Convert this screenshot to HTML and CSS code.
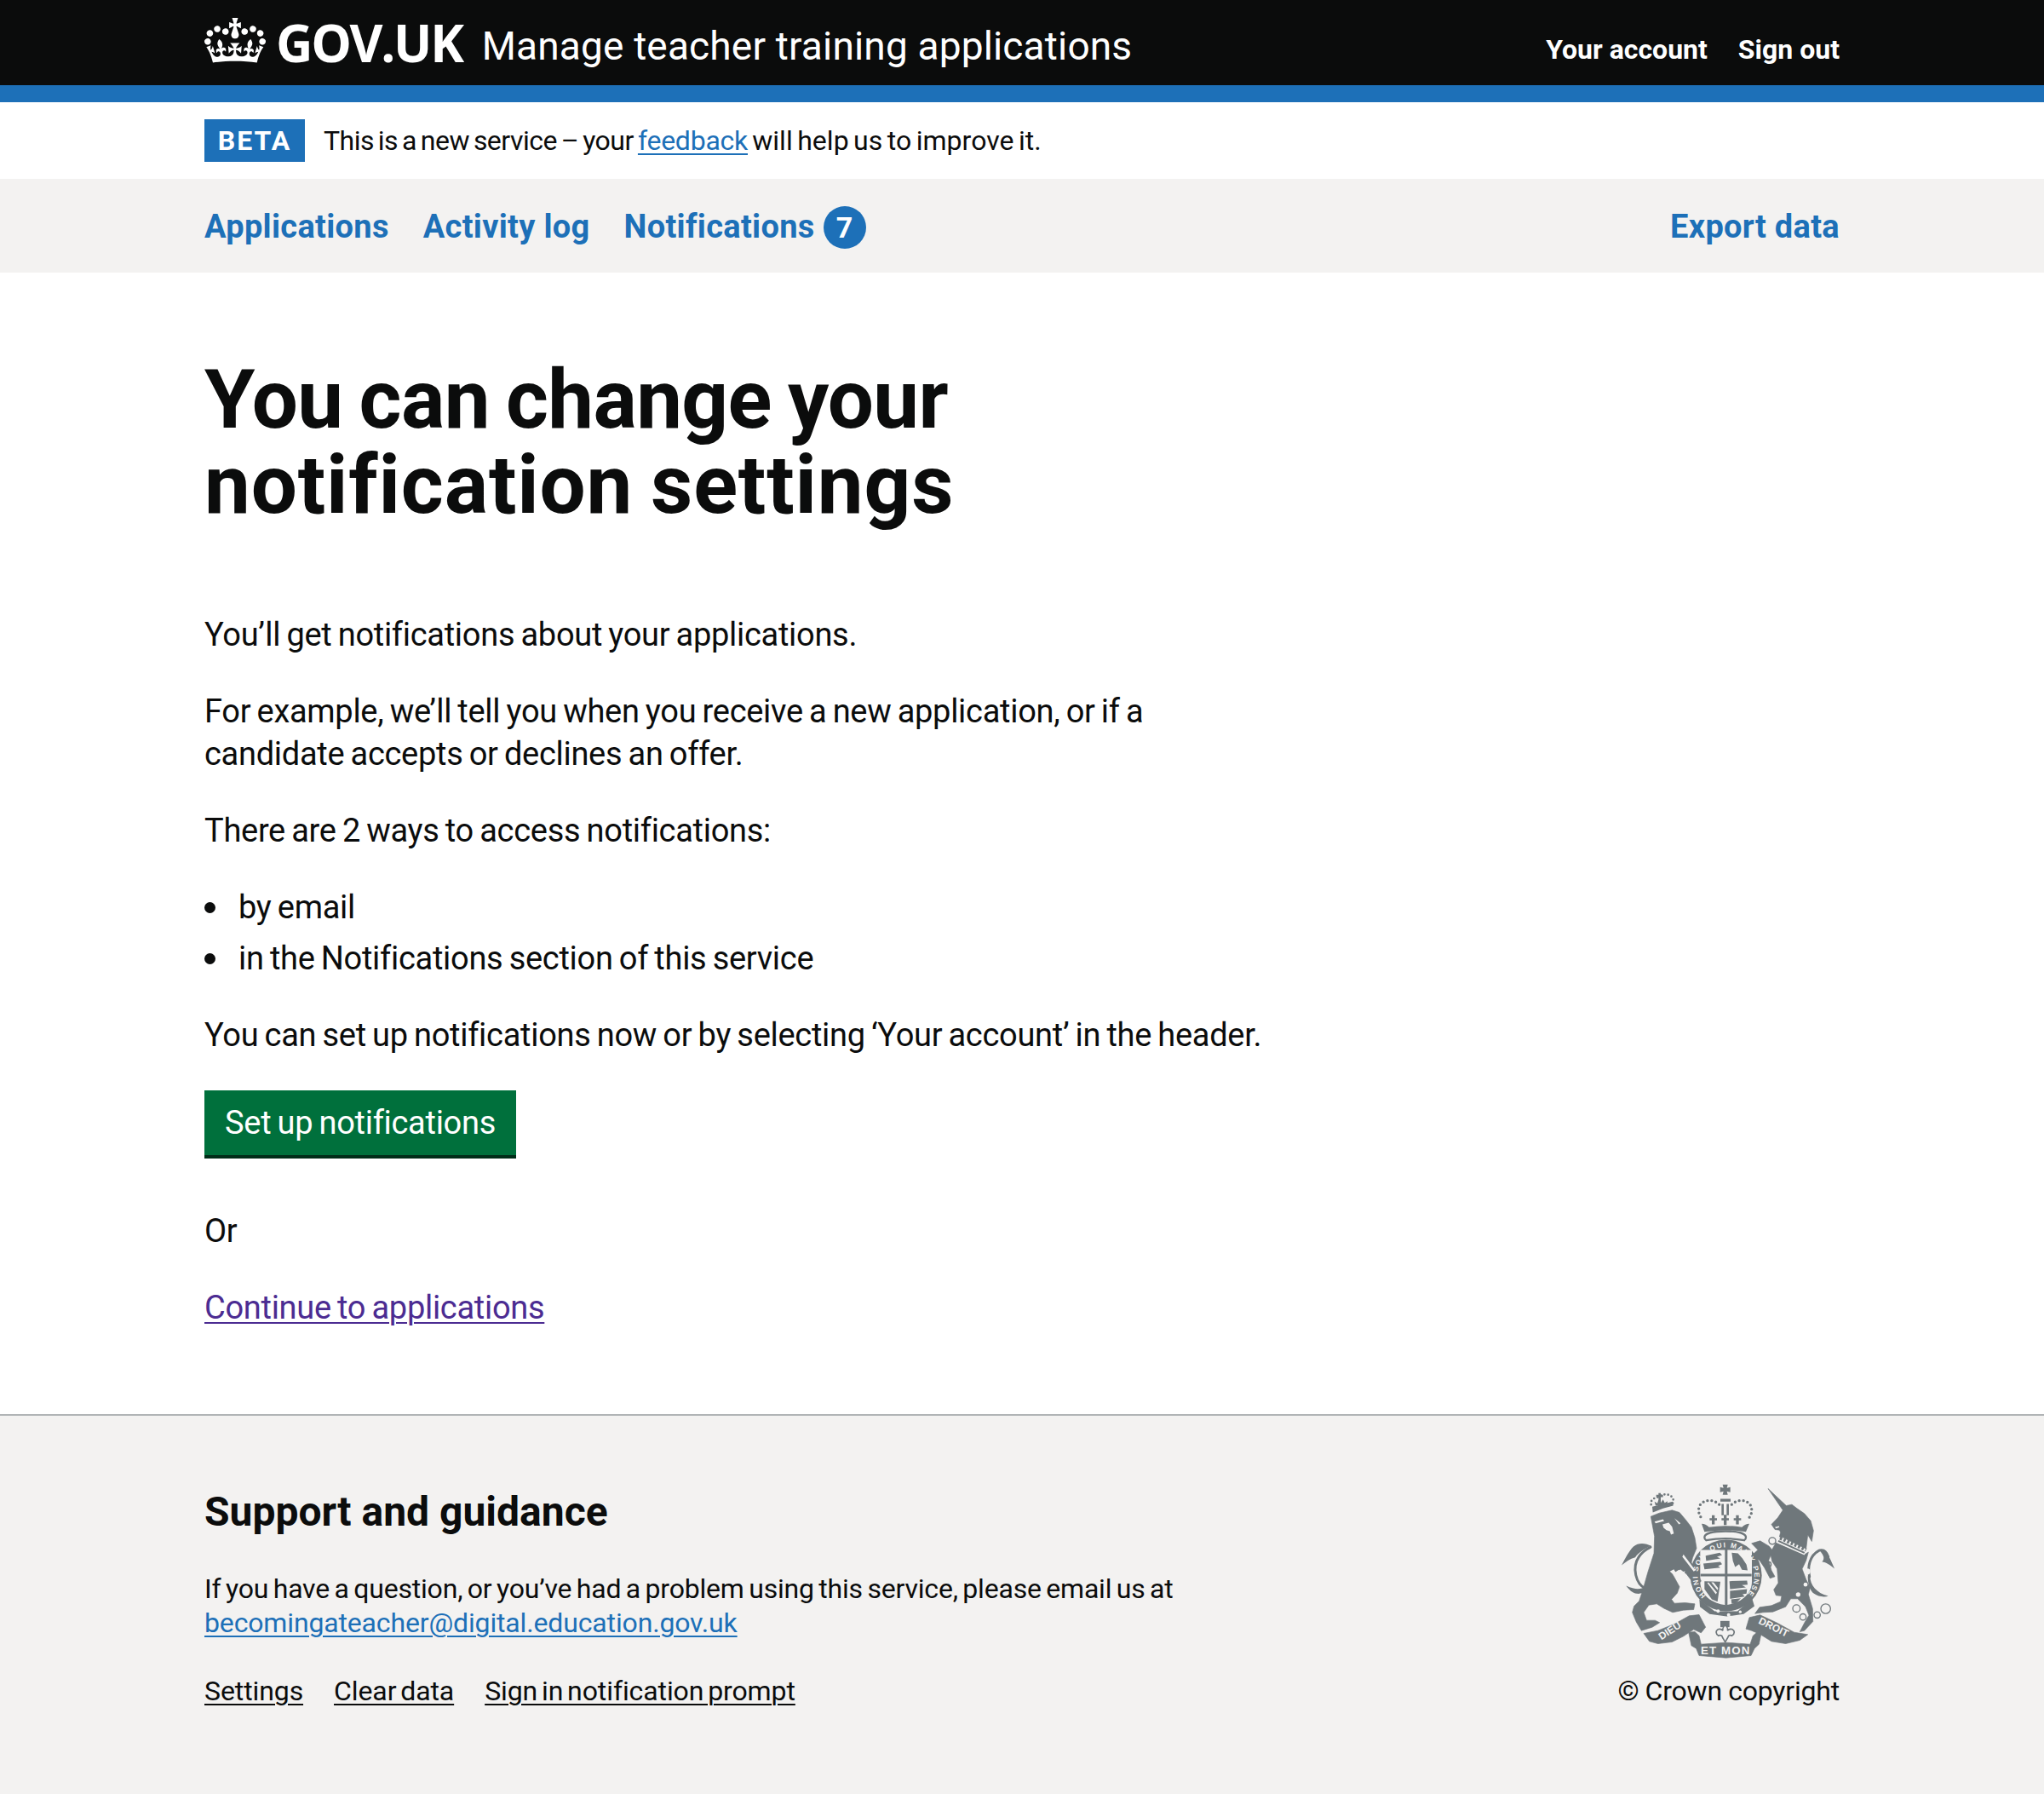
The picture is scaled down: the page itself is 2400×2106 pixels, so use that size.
FILE: index.html
```html
<!DOCTYPE html>
<html lang="en">
<head>
<meta charset="utf-8">
<title>You can change your notification settings</title>
<link rel="stylesheet" href="styles.css">
</head>
<body>
<header class="header">
  <div class="wrap header-row">
    <div class="brand">
      <svg class="crown" viewBox="0 0 132 97" aria-hidden="true"><path fill="currentColor" d="M25 30.2c3.5 1.5 7.7-.2 9.1-3.7 1.5-3.6-.2-7.8-3.9-9.2-3.6-1.4-7.6.3-9.1 3.9-1.4 3.5.3 7.5 3.9 9zM9 39.5c3.6 1.5 7.8-.2 9.2-3.7 1.5-3.6-.2-7.8-3.9-9.1-3.6-1.5-7.6.2-9.1 3.8-1.4 3.5.3 7.5 3.8 9zM4.4 57.2c3.5 1.5 7.7-.2 9.1-3.8 1.5-3.6-.2-7.7-3.9-9.1-3.5-1.5-7.6.3-9.1 3.8-1.4 3.5.3 7.6 3.9 9.1zm38.3-21.4c3.5 1.5 7.7-.2 9.1-3.8 1.5-3.6-.2-7.7-3.9-9.1-3.6-1.5-7.6.3-9.1 3.8-1.3 3.6.4 7.7 3.9 9.1zm64.4-5.6c-3.6 1.5-7.8-.2-9.1-3.7-1.5-3.6.2-7.8 3.8-9.2 3.6-1.4 7.7.3 9.2 3.9 1.3 3.5-.4 7.5-3.9 9zm15.9 9.3c-3.6 1.5-7.7-.2-9.1-3.7-1.5-3.6.2-7.8 3.7-9.1 3.6-1.5 7.7.2 9.2 3.8 1.5 3.5-.3 7.5-3.8 9zm4.7 17.7c-3.6 1.5-7.8-.2-9.2-3.8-1.5-3.6.2-7.7 3.9-9.1 3.6-1.5 7.7.3 9.2 3.8 1.3 3.5-.4 7.6-3.9 9.1zM89.3 35.8c-3.6 1.5-7.8-.2-9.2-3.8-1.4-3.6.2-7.7 3.9-9.1 3.6-1.5 7.7.3 9.2 3.8 1.4 3.6-.3 7.7-3.9 9.1zM69.7 17.7l8.9 4.7V9.3l-8.9 2.8c-.2-.3-.5-.6-.9-.9L72.4 0H59.6l3.5 11.2c-.3.3-.6.5-.9.9l-8.8-2.8v13.1l8.8-4.7c.3.3.6.7.9.9l-5 15.4v.1c-.2.8-.4 1.6-.4 2.4 0 4.1 3.1 7.5 7 8.1h.2c.3 0 .7.1 1 .1.4 0 .7 0 1-.1h.2c4-.6 7.1-4.1 7.1-8.1 0-.8-.1-1.7-.4-2.4V34l-5.1-15.4c.4-.2.7-.6 1-.9zM66 92.8c16.9 0 32.8 1.1 47.1 3.2 4-16.9 8.9-26.7 14-33.5l-9.6-3.4c1 4.9 1.1 7.2 0 10.2-1.5-1.4-3-4.3-4.2-8.7L108.6 76c2.8-2 5-3.2 7.5-3.3-4.4 9.4-10 11.9-13.6 11.2-4.3-.8-6.3-4.6-5.6-7.9 1-4.7 5.7-5.9 8-.5 4.3-8.7-3-11.4-7.6-8.8 7.1-7.2 7.9-13.5 2.1-21.1-8 6.1-8.1 12.3-4.5 20.8-4.7-5.4-12.1-2.5-9.5 6.2 3.4-5.2 7.9-2 7.2 3.1-.6 4.3-6.4 7.8-13.5 7.2-10.3-.9-10.9-8-11.2-13.8 2.5-.5 7.1 1.8 11 7.3L80.2 60c-4.1 4.4-8 5.3-12.3 5.4 1.4-4.4 8-11.6 8-11.6H55.5s6.4 7.2 7.9 11.6c-4.2-.1-8-1-12.3-5.4l1.4 16.4c3.9-5.5 8.5-7.7 10.9-7.3-.3 5.8-.9 12.8-11.1 13.8-7.2.6-12.9-2.9-13.5-7.2-.7-5 3.8-8.3 7.1-3.1 2.7-8.7-4.6-11.6-9.4-6.2 3.7-8.5 3.6-14.7-4.6-20.8-5.8 7.6-5 13.9 2.2 21.1-4.7-2.6-11.9.1-7.7 8.8 2.3-5.5 7.1-4.2 8.1.5.7 3.3-1.3 7.1-5.7 7.9-3.5.7-9-1.8-13.5-11.2 2.5.1 4.7 1.3 7.5 3.3l-4.7-15.4c-1.2 4.4-2.7 7.2-4.3 8.7-1.1-3-.9-5.3 0-10.2l-9.5 3.4c5 6.9 9.9 16.7 14 33.5 14.8-2.1 30.8-3.2 47.7-3.2z"/></svg>
      <span class="logotype">GOV.UK</span>
      <span class="service">Manage teacher training applications</span>
    </div>
    <nav class="account">
      <a href="#">Your account</a>
      <a href="#">Sign out</a>
    </nav>
  </div>
</header>
<div class="stripe"></div>
<div class="wrap phase">
  <strong class="tag">BETA</strong>
  <span><span class="lead">This is a new service – your</span> <a href="#" class="link">feedback</a> <span class="tail">will help us to improve it.</span></span>
</div>
<nav class="primary">
  <div class="wrap primary-row">
    <div class="primary-left">
      <a href="#">Applications</a>
      <a href="#">Activity log</a>
      <a href="#" class="notif">Notifications <span class="count">7</span></a>
    </div>
    <a href="#">Export data</a>
  </div>
</nav>
<main class="wrap main">
  <h1><span class="h1-a">You can change your</span><br><span class="h1-b">notification settings</span></h1>
  <p>You’ll get notifications about your applications.</p>
  <p>For example, we’ll tell you when you receive a new application, or if a<br>candidate accepts or declines an offer.</p>
  <p>There are 2 ways to access notifications:</p>
  <ul class="bullets">
    <li>by email</li>
    <li>in the Notifications section of this service</li>
  </ul>
  <p>You can set up notifications now or by selecting ‘Your account’ in the header.</p>
  <a href="#" class="button">Set up notifications</a>
  <p>Or</p>
  <p class="last"><a href="#" class="visited">Continue to applications</a></p>
</main>
<footer class="footer">
  <div class="wrap footer-row">
    <div class="footer-left">
      <h2>Support and guidance</h2>
      <p>If you have a question, or you’ve had a problem using this service, please email us at<br><a href="#" class="link email">becomingateacher@digital.education.gov.uk</a></p>
      <ul class="meta">
        <li><a href="#">Settings</a></li>
        <li><a href="#">Clear data</a></li>
        <li><a href="#">Sign in notification prompt</a></li>
      </ul>
    </div>
    <div class="footer-right">
      <svg class="arms" viewBox="60 30 780 620" aria-hidden="true">
        <defs>
          <path id="garter" d="M369 429A100 100 0 1 1 511 429"/>
        </defs>
        <g class="ag">
          <!-- lion tail -->
          <path class="as8" d="M156 404C122 388 108 330 132 294c10-16 26-28 42-36"/>
          <path d="M176 254c-18-10-44-14-62 2-18 18-30 44-42 66 14-12 30-24 48-28 12-16 34-32 56-40zM156 398c-16 8-34 12-68-4 10 14 22 26 38 28 14 1 26-4 36-10z"/>
          <!-- crest -->
          <path d="M428 38h18l-3 12 12-3v18l-12-3 3 12h-18l3-12-12 3V47l12 3zM420 88h36v10h-36zM424 106h8v40h-8zM442 106h8v40h-8z"/>
          <path class="ao10" d="M416 108c-24-24-68-16-72 14-2 16 4 30 16 40M460 108c24-24 66-16 70 14 2 16-4 30-16 40"/>
          <path d="M390 146h10v10h8v8h-8v14h-10v-14h-8v-8h8zM432 144h10v12h8v8h-8v16h-10v-16h-8v-8h8zM475 146h10v10h8v8h-8v14h-10v-14h-8v-8h8z"/>
          <path d="M354 176q14 0 26 12q58-10 116 0q12-12 26-12l-12 28q-72-10-146 0z"/>
          <path class="ao7" d="M364 224c0-14 30-22 74-22s72 8 72 22c0 6-2 8-6 10-44-8-90-8-134 0-4-2-6-4-6-10z"/>
          <!-- garter ring -->
          <circle cx="440" cy="358" r="126"/>
          <path class="al" d="M349 268h182v112c0 44-40 76-91 82-52-4-91-38-91-82z"/>
          <path d="M436 266h9v198h-9zM350 352h180v9H350z"/>
          <path d="M368 288l50-10 8 8-18 6 12 6-50 8zM360 316l60-6 6 8-14 6 8 6-56 6zM460 278l22 2 16 18 14 22 4 20-20-2-10-20-14 10-8-22zM364 378l56 2-10 70-20-8-26-36zM452 378l62-2 2 14-20 2 14 8-56 6zM454 412l60-6-2 16-14 2 8 8-52 8zM458 442l34-4-18 18-14 2z"/>
          <path class="al" d="M374 384l30 40 4-6-30-36zM388 382l22 28 2-8-16-20z"/>
          <path d="M346 442l54 42h80l52-44 8 26-38 28-60 8-60-8-34-26z"/>
          <circle class="al" cx="412" cy="483" r="6"/><circle class="al" cx="449" cy="497" r="6"/><circle class="al" cx="490" cy="486" r="5"/>
          <!-- lion body -->
          <path class="as2" d="M175 150L205 138L250 128L276 136L298 162L318 188L330 225L336 262L322 296L318 312L340 350L352 378L340 388L320 378L300 352L280 336L262 345L245 342L262 372L276 398L268 420L248 442L258 456L296 454L330 458L326 478L290 480L252 488L222 474L196 458L168 462L150 488L160 516L190 516L206 524L180 540L142 552L124 522L110 488L116 466L134 448L148 405L165 345L186 280L188 220Z"/>
          <path class="al" d="M216 178l22-6 12 14 6 24-10 4-4-12-12-4-10-8zM290 284l42 56-6 4-40-52zM242 344l14-8 6 10 12-8 8 10 14-6-10 20-10-2-8 10-12-14z"/>
          <path class="al" d="M188 168l30-8 4 6-30 8zM258 156l22 18-6 4z"/>
          <!-- lion crown -->
          <path class="ao5" d="M176 108c-4-14 10-24 24-26 18-12 36-14 50 0 6 6 4 14 2 22"/>
          <path d="M180 116l72-18 2 14-36 10-36 14zM202 68h8v6h8v8h-8v22h-8V82h-8v-8h8z"/>
          <path d="M192 112l-4-14 10 6 4-12 8 10 8-12 6 12 10-6-2 12z"/>
          <!-- unicorn tail -->
          <path class="as8" d="M734 362c-8-34 0-74 34-92 18-6 26 4 32 22"/>
          <path d="M768 266c20-4 34 18 54 68-18-14-28-22-44-24 0 0 10-10 4-22-4-8-8-12-14-22zM736 360c0 30 22 60 64 70-14 6-36 2-50-8-14-10-22-34-22-62z"/>
          <!-- unicorn -->
          <path class="as2" d="M588 52L652 112L672 108L690 122L716 140L738 165L748 200L742 238L728 215L722 264L640 224L628 222L632 206L628 198L612 196L600 178L622 155L640 128Z"/>
          <path class="as2" d="M616 242L716 284L730 276L722 305L708 335L722 372L736 400L730 425L745 475L746 520L716 552L700 556L716 525L732 498L720 468L692 440L668 440L650 468L605 486L570 488L542 492L558 470L600 464L632 450L636 430L616 428L608 408L624 384L620 335L602 308L596 278Z"/>
          <path class="as2" d="M530 245L560 236L592 255L612 280L596 290L590 305L600 340L612 362L595 368L575 330L558 305L528 290L552 268Z"/>
          <path class="al" d="M626 222L726 268L716 286L616 242Z"/>
          <path class="ad" d="M630 226L722 268"/>
          <path class="at6" d="M624 236L716 278"/>
          <circle class="al" cx="726" cy="344" r="11"/><circle class="al" cx="720" cy="390" r="7"/><circle class="al" cx="694" cy="425" r="8"/>
          <path class="al" d="M612 188l14-4 2 4-12 4z"/>
          <!-- fleur -->
          <path d="M420 518h32v22h-32z"/>
          <path class="af" d="M437 532c8 8 10 14 8 20 6-6 16-8 22 0 4 8 0 14-6 18-4-2-8-2-12 0-2 6-6 12-12 22-6-10-10-16-12-22-4-2-8-2-12 0-6-4-10-10-6-18 6-8 16-6 22 0-2-6 0-12 8-20z"/>
          <!-- scrolls -->
          <path class="as2" d="M150 562L200 552L260 528L310 500L345 496L368 540L352 560L326 548L290 572L250 592L200 598L170 590Z"/>
          <path class="as2" d="M522 506L560 497L620 525L680 558L728 566L700 586L650 598L600 590L560 565L530 552L510 546Z"/>
          <path class="as2" d="M308 558L330 556L345 570L352 600L440 594L525 600L535 570L552 555L566 552L556 600L540 615L528 640L440 648L345 640L335 615L318 605Z"/>
        </g>
        <g class="ar">
          <circle cx="603" cy="236" r="12"/><circle cx="590" cy="319" r="9"/><circle cx="688" cy="474" r="13"/><circle cx="711" cy="504" r="11"/><circle cx="761" cy="497" r="11"/><circle cx="791" cy="475" r="17"/>
        </g>
        <g class="at">
          <text class="small"><textPath href="#garter" textLength="462">HONI SOIT QUI MAL Y PENSE</textPath></text>
          <text transform="translate(212 586) rotate(-33)">DIEU</text>
          <text class="mon" x="351" y="635" textLength="172">ET MON</text>
          <text transform="translate(552 526) rotate(26)">DROIT</text>
        </g>
      </svg>
      <p class="copyright">© Crown copyright</p>
    </div>
  </div>
</footer>
</body>
</html>
```
FILE: styles.css
```css
* { box-sizing: border-box; }
html, body { margin: 0; padding: 0; }
body { font-family: Roboto, Arial, sans-serif; font-size: 38px; line-height: 50px; letter-spacing: -.29px; word-spacing: -1.9px; color: #0b0c0c; background: #fff; }
a { color: inherit; }
.wrap { width: 1920px; margin: 0 auto; }
.header { background: #0b0c0c; color: #fff; height: 100px; }
.header-row { display: flex; justify-content: space-between; height: 100px; }
.brand { display: flex; align-items: flex-start; }
.crown { width: 72px; height: 53px; margin-top: 21px; color: #fff; flex: none; }
.logotype { font-family: "Open Sans", sans-serif; font-weight: 700; font-size: 60px; line-height: 60px; margin: 20px 0 0 12px; letter-spacing: -2.3px; word-spacing: 0; }
.service { font-size: 46px; line-height: 60px; margin: 24px 0 0 23px; letter-spacing: .17px; word-spacing: 0; }
.account { display: flex; gap: 36px; padding-top: 33px; font-size: 32px; line-height: 50px; font-weight: 700; letter-spacing: 0; word-spacing: 0; }
.account a { text-decoration: none; color: #fff; }
.stripe { height: 20px; background: #1d70b8; }
.phase { display: flex; align-items: center; height: 90px; font-size: 32px; gap: 22px; letter-spacing: -.25px; word-spacing: -2.5px; }
.lead { letter-spacing: -.52px; }
.tail { letter-spacing: .03px; }
.tag { background: #1d70b8; color: #fff; height: 50px; width: 118px; font-size: 32px; line-height: 50px; font-weight: 700; letter-spacing: 2px; text-align: center; }
.link { color: #1d70b8; text-underline-offset: 4px; text-decoration-thickness: 2px; }
.primary { background: #f3f2f1; height: 110px; }
.primary-row { display: flex; justify-content: space-between; align-items: center; height: 110px; padding-top: 2px; font-size: 38px; font-weight: 700; color: #1d70b8; letter-spacing: .3px; word-spacing: 0; }
.primary a { text-decoration: none; color: #1d70b8; }
.primary-left { display: flex; gap: 40px; align-items: center; }
.notif { display: flex; align-items: center; gap: 10px; }
.count { display: inline-block; width: 50px; height: 50px; border-radius: 50%; background: #1d70b8; color: #fff; text-align: center; font-size: 34px; line-height: 50px; margin-top: 1px; }
.main { padding-top: 99px; padding-bottom: 60px; }
h1 { margin: 0 0 101px; font-size: 96px; line-height: 100px; font-weight: 700; word-spacing: -4px; }
.h1-a { letter-spacing: -.66px; }
.h1-b { letter-spacing: .86px; }
p { margin: 0 0 40px; }
.last { margin-bottom: 40px; }
.bullets { list-style: none; margin: 0 0 40px; padding: 0; }
.bullets li { display: flex; margin-bottom: 10px; }
.bullets li::before { content: ""; flex: none; width: 13px; height: 13px; border-radius: 50%; background: #0b0c0c; margin: 19px 27px 0 0; }
.button { display: block; width: 366px; height: 80px; background: #00703c; color: #fff; text-decoration: none; border-bottom: 4px solid #002d18; line-height: 76px; text-align: center; margin-bottom: 60px; }
.visited { color: #4c2c92; text-underline-offset: 4px; text-decoration-thickness: 2px; }
.footer { background: #f3f2f1; border-top: 2px solid #b1b4b6; height: 446px; padding-top: 88px; }
.footer-row { display: flex; justify-content: space-between; }
.footer-left { font-size: 32px; line-height: 40px; letter-spacing: -.2px; word-spacing: -2.2px; }
.footer-left h2 { margin: 0 0 45px; font-size: 48px; line-height: 50px; font-weight: 700; letter-spacing: 0; word-spacing: 0; }
.footer-left p { margin: 0 0 40px; }
.email { letter-spacing: -.15px; }
.meta { display: flex; gap: 36px; list-style: none; padding: 0; margin: 0; letter-spacing: -.1px; word-spacing: -3px; }
.meta a { text-underline-offset: 4px; text-decoration-thickness: 2px; }
.footer-right { display: flex; flex-direction: column; align-items: flex-end; margin-top: -10px; }
.arms { width: 260px; height: 207px; }
.ag { fill: #6f777b; }
.ag .al { fill: #f3f2f1; }
.ag .af { fill: #f3f2f1; stroke: #6f777b; stroke-width: 5; }
.ag .as2 { stroke: #6f777b; stroke-width: 2; stroke-linejoin: round; }
.ag .as8 { fill: none; stroke: #6f777b; stroke-width: 9; stroke-linecap: round; }
.ag .ao5 { fill: none; stroke: #6f777b; stroke-width: 8; stroke-linecap: round; stroke-dasharray: 0 13; }
.ag .ao10 { fill: none; stroke: #6f777b; stroke-width: 10; stroke-linecap: round; stroke-dasharray: 0 15; }
.ag .ao7 { fill: #f3f2f1; stroke: #6f777b; stroke-width: 7; }
.ag .ad { fill: none; stroke: #6f777b; stroke-width: 12; stroke-dasharray: 8 6; }
.ag .at6 { fill: none; stroke: #6f777b; stroke-width: 6; }
.ar { fill: none; stroke: #6f777b; stroke-width: 4; }
.at { fill: #f3f2f1; font-family: "Liberation Sans", sans-serif; font-size: 36px; font-weight: 700; letter-spacing: 0; word-spacing: 0; }
.at .small { font-size: 25px; }
.at .mon { font-size: 40px; }
.copyright { margin: 18px 0 0; font-size: 32px; line-height: 40px; letter-spacing: -.2px; word-spacing: -.5px; }
```
